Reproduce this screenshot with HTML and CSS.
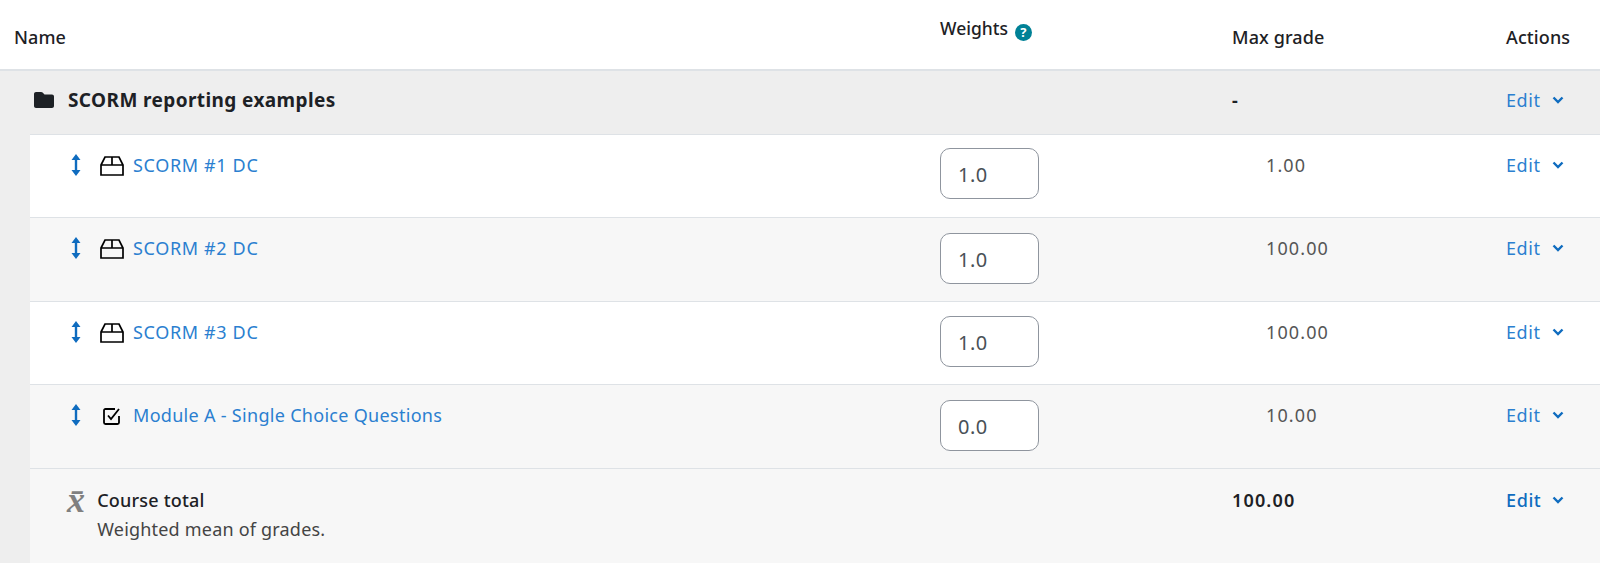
FILE: index.html
```html
<!DOCTYPE html>
<html lang="en">
<head>
    <meta charset="UTF-8">
    <title>Gradebook setup</title>
    <link rel="stylesheet" href="styles.css">
</head>
<body>

    <table class="grade-table">
        <colgroup>
            <col class="col-indent">
            <col class="col-name">
            <col class="col-weights">
            <col class="col-max">
            <col class="col-actions">
        </colgroup>
        <thead>
            <tr>
                <th colspan="2" class="head-name">Name</th>
                <th class="head-weights">Weights<span class="help-icon">?</span></th>
                <th>Max grade</th>
                <th>Actions</th>
            </tr>
        </thead>
        <tbody>
            <tr class="category-row">
                <td colspan="2" class="category-name">
                    <div class="item-name">
                        <svg class="folder-icon" viewBox="0 0 20 16"><path d="M2 0h5.2c.5 0 1 .2 1.400.6L10.500 2.500H18c1.100 0 2 .9 2 2V14c0 1.100-.9 2-2 2H2c-1.100 0-2-.9-2-2V2C0 .9.9 0 2 0z"/></svg>
                        <span>SCORM reporting examples</span>
                    </div>
                </td>
                <td></td>
                <td class="strong-cell">-</td>
                <td><a class="edit-link" href="#">Edit <svg class="chevron" viewBox="0 0 12 8"><path d="M1.500 1.500 6 6l4.500-4.500"/></svg></a></td>
            </tr>
            <tr class="item-row">
                <td class="indent"></td>
                <td>
                    <div class="item-name">
                        <svg class="move-icon" viewBox="0 0 10 22"><path d="M5 3v16"/><path class="tip" d="M5 0 9.500 6H.5zM5 22 .5 16h9z"/></svg>
                        <svg class="box-icon" viewBox="0 0 24 20"><path d="M1 9 5 1h14l4 8v10H1zM1 9h22M12 1v8"/></svg>
                        <a class="scorm-link" href="#">SCORM #1 DC</a>
                    </div>
                </td>
                <td><input class="weight-input" type="text" value="1.0"></td>
                <td class="max-cell">1.00</td>
                <td><a class="edit-link" href="#">Edit <svg class="chevron" viewBox="0 0 12 8"><path d="M1.500 1.500 6 6l4.500-4.500"/></svg></a></td>
            </tr>
            <tr class="item-row">
                <td class="indent"></td>
                <td>
                    <div class="item-name">
                        <svg class="move-icon" viewBox="0 0 10 22"><path d="M5 3v16"/><path class="tip" d="M5 0 9.500 6H.5zM5 22 .5 16h9z"/></svg>
                        <svg class="box-icon" viewBox="0 0 24 20"><path d="M1 9 5 1h14l4 8v10H1zM1 9h22M12 1v8"/></svg>
                        <a class="scorm-link" href="#">SCORM #2 DC</a>
                    </div>
                </td>
                <td><input class="weight-input" type="text" value="1.0"></td>
                <td class="max-cell">100.00</td>
                <td><a class="edit-link" href="#">Edit <svg class="chevron" viewBox="0 0 12 8"><path d="M1.500 1.500 6 6l4.500-4.500"/></svg></a></td>
            </tr>
            <tr class="item-row">
                <td class="indent"></td>
                <td>
                    <div class="item-name">
                        <svg class="move-icon" viewBox="0 0 10 22"><path d="M5 3v16"/><path class="tip" d="M5 0 9.500 6H.5zM5 22 .5 16h9z"/></svg>
                        <svg class="box-icon" viewBox="0 0 24 20"><path d="M1 9 5 1h14l4 8v10H1zM1 9h22M12 1v8"/></svg>
                        <a class="scorm-link" href="#">SCORM #3 DC</a>
                    </div>
                </td>
                <td><input class="weight-input" type="text" value="1.0"></td>
                <td class="max-cell">100.00</td>
                <td><a class="edit-link" href="#">Edit <svg class="chevron" viewBox="0 0 12 8"><path d="M1.500 1.500 6 6l4.500-4.500"/></svg></a></td>
            </tr>
            <tr class="item-row">
                <td class="indent"></td>
                <td>
                    <div class="item-name">
                        <svg class="move-icon" viewBox="0 0 10 22"><path d="M5 3v16"/><path class="tip" d="M5 0 9.500 6H.5zM5 22 .5 16h9z"/></svg>
                        <svg class="check-icon" viewBox="0 0 18 18"><path d="M12 2H2.500C1.700 2 1 2.700 1 3.500v12c0 .8.700 1.500 1.500 1.500h12c.8 0 1.500-.7 1.500-1.500V9"/><path d="M5 8.500 8 12l8-10"/></svg>
                        <a href="#">Module A - Single Choice Questions</a>
                    </div>
                </td>
                <td><input class="weight-input" type="text" value="0.0"></td>
                <td class="max-cell">10.00</td>
                <td><a class="edit-link" href="#">Edit <svg class="chevron" viewBox="0 0 12 8"><path d="M1.500 1.500 6 6l4.500-4.500"/></svg></a></td>
            </tr>
            <tr class="total-row">
                <td class="indent"></td>
                <td>
                    <div class="total-name">
                        <span class="mean-icon">x̄</span>
                        <div>
                            <div class="total-title">Course total</div>
                            <div class="total-desc">Weighted mean of grades.</div>
                        </div>
                    </div>
                </td>
                <td></td>
                <td class="strong-cell">100.00</td>
                <td><a class="edit-link total-edit" href="#">Edit <svg class="chevron" viewBox="0 0 12 8"><path d="M1.500 1.500 6 6l4.500-4.500"/></svg></a></td>
            </tr>
        </tbody>
    </table>

</body>
</html>
```

FILE: styles.css
```css
:root {
    --text-color: #1d2125;
    --link-color: #2b7fd0;
    --icon-blue: #0f6cbf;
    --border-color: #dee2e6;
}
html, body {
    margin: 0;
    height: 564px;
    overflow: hidden;
    background-color: #fff;
    color: var(--text-color);
    font-family: "Noto Sans", sans-serif;
    font-size: 18px;
    letter-spacing: 0.3px;
}
.grade-table {
    width: 1600px;
    table-layout: fixed;
    border-collapse: collapse;
}
.col-indent { width: 30px; }
.col-name { width: 898px; }
.col-weights { width: 292px; }
.col-max { width: 274px; }
.col-actions { width: 106px; }

th {
    height: 70px;
    padding: 4px 12px 0;
    box-sizing: border-box;
    border-bottom: 2px solid var(--border-color);
    text-align: left;
    font-weight: 500;
    font-size: 18px;
    letter-spacing: 0.1px;
}
.head-name { padding-left: 14px; }
.head-weights { padding-bottom: 16px; font-size: 17.500px; letter-spacing: 0; }
.help-icon {
    display: inline-flex;
    justify-content: center;
    align-items: center;
    width: 17px;
    height: 17px;
    margin-left: 7px;
    border-radius: 50%;
    background-color: #008196;
    color: #fff;
    font-size: 13px;
    font-weight: 700;
    vertical-align: -2px;
}
td {
    padding: 0 12px;
    box-sizing: border-box;
    vertical-align: top;
    border-bottom: 1px solid var(--border-color);
}
a {
    color: var(--link-color);
    text-decoration: none;
}
.indent {
    padding: 0;
    background-color: #eee;
    border-bottom-color: #eee;
}

/* category row */
.category-row td {
    height: 64px;
    padding-bottom: 4px;
    background-color: #eee;
    vertical-align: middle;
    border-bottom: none;
}
.category-name { padding-left: 34px; font-weight: 700; font-size: 19px; letter-spacing: 0.4px; }
.folder-icon {
    width: 20px;
    height: 16px;
    margin-right: 14px;
    fill: var(--text-color);
}
.strong-cell { font-weight: 600; letter-spacing: 1.150px; }
.category-row .strong-cell { font-weight: 700; }

/* item rows */
.item-row td {
    height: 83.600px;
    padding-top: 18px;
}
.item-row td.indent { padding: 0; }
.item-row:nth-child(2) td:not(.indent) { border-top: 1px solid var(--border-color); }
.item-row:nth-child(odd) td:not(.indent) { background-color: #f7f7f7; }
.item-row:nth-child(even) td:not(.indent) { background-color: #fff; }
.item-row td:nth-child(3) { padding-top: 14.500px; }
.item-row:nth-child(2) td:nth-child(3) { padding-top: 13px; }
.item-name {
    display: flex;
    align-items: center;
}
.scorm-link { letter-spacing: 0.650px; }
.move-icon {
    width: 10px;
    height: 22px;
    margin-left: 29px;
    fill: none;
    stroke: var(--icon-blue);
    stroke-width: 2.400;
}
.move-icon .tip {
    fill: var(--icon-blue);
    stroke: none;
}
.box-icon {
    width: 24px;
    height: 20px;
    margin-top: 2px;
    margin-left: 19px;
    margin-right: 9px;
    fill: none;
    stroke: #000;
    stroke-width: 1.700;
}
.check-icon {
    width: 18px;
    height: 18px;
    margin-top: 2px;
    margin-left: 22px;
    margin-right: 12px;
    fill: none;
    stroke: #000;
    stroke-width: 1.800;
}
.weight-input {
    display: block;
    width: 99px;
    height: 51px;
    box-sizing: border-box;
    padding: 2px 17px 0;
    border: 1px solid #8f959e;
    border-radius: 10px;
    background-color: #fff;
    color: #495057;
    font-family: "Noto Sans", sans-serif;
    font-size: 20px;
    letter-spacing: 0.5px;
}
.max-cell {
    color: #555;
    letter-spacing: 1.100px;
}
.item-row .max-cell { padding-left: 46px; }
.edit-link {
    display: flex;
    align-items: center;
    gap: 6px;
    letter-spacing: 0.6px;
}
.chevron {
    width: 12px;
    height: 8px;
    margin-left: 5px;
    fill: none;
    stroke: var(--icon-blue);
    stroke-width: 2.400;
}

/* course total */
.total-row td {
    height: 95px;
    padding-top: 19px;
    background-color: #f7f7f7;
    border-bottom: none;
}
.total-row td.indent { padding: 0; background-color: #eee; }
.total-name {
    display: flex;
    gap: 12px;
    padding-left: 25px;
    letter-spacing: 0.2px;
}
.mean-icon {
    color: #808080;
    font-family: "Liberation Serif", serif;
    font-style: italic;
    font-weight: 700;
    font-size: 36px;
    line-height: 24px;
}
.total-title { font-weight: 500; line-height: 24px; }
.total-desc { margin-top: 5px; line-height: 24px; color: #444; }
.total-edit { color: var(--icon-blue); font-weight: 500; }
```
